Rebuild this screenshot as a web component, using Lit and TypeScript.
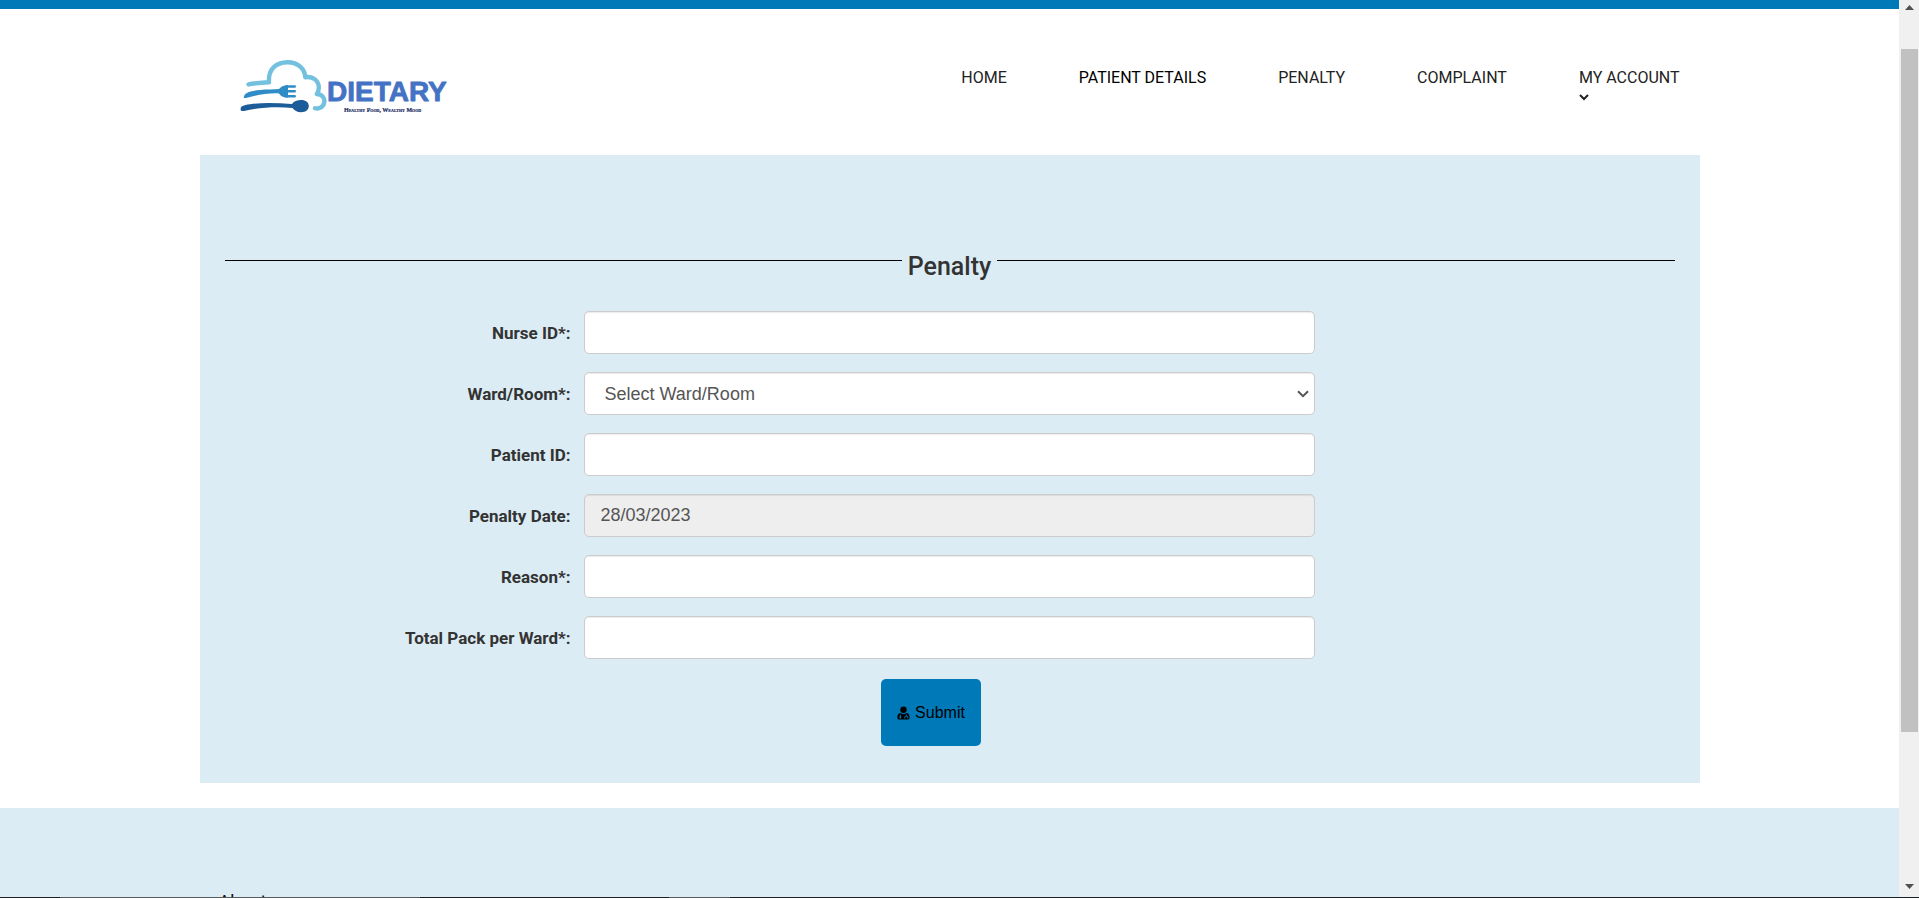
import { LitElement, html, css } from "lit";
import { customElement } from "lit/decorators.js";

@customElement("dietary-logo")
export class DietaryLogo extends LitElement {
  static styles = css`
    :host { display: block; }
    svg { display: block; width: 216px; height: 60px; }
    .word { font: 700 28px "Liberation Sans", Arial, sans-serif; }
    .tag { font: 700 6px "Liberation Serif", "Times New Roman", serif; font-variant: small-caps; }
  `;
  render() {
    return html`
      <svg viewBox="0 0 216 60" role="img" aria-label="Dietary">
        <g fill="none" stroke-linecap="round" stroke-linejoin="round">
          <path stroke="#74c0df" stroke-width="4.4"
            d="M10.5 28.4 C17 27 24 26.8 31 26.3 C30 13 38 6.4 49.5 6.3 C60 6.2 67 13 67.2 21.3 C74 20 80.5 24 80.8 31 C80.9 34 80 36.5 78.8 38 C84 38.300 87 42 86.3 46.200 C85.500 51 81.500 53.200 77 52.200"/>
          <path stroke="#2f8cc6" stroke-width="2.600" d="M48 30.500 H56.700 M46 35.300 H56.700 M48 40.300 H56.700"/>
        </g>
        <path fill="#2f8cc6" d="M5.800 42 C5.800 36.500 12 35 22 34 C29 33.200 36 33.500 41 33 C43.500 30 46 29.200 50 29.200 V41.600 C46 41.600 43 40.500 41 37.400 C30 37 19 38.800 8 42 Z"/>
        <path fill="#1c5c99" d="M2.600 53.500 C2.500 50 5 49.200 12 48.200 C26 46 40 47 54 48 C56 45 59 44 63 44 C68 44 70.800 46.500 70.800 50 C70.800 53.500 68 56.200 63 56.200 C59 56.200 56.500 54.500 54.500 52 C38 50.500 21 51.500 6 55 C4 55.300 2.700 55 2.600 53.500 Z"/>
        <text class="word" x="89" y="45" fill="#4472c4" stroke="#4472c4" stroke-width=".8" stroke-linejoin="round">DIETARY</text>
        <text class="tag" x="106" y="56" fill="#1f2f63" stroke="#1f2f63" stroke-width=".2">Healthy Food, Wealthy Mood</text>
      </svg>
    `;
  }
}

@customElement("page-scrollbar")
export class PageScrollbar extends LitElement {
  static styles = css`
    :host { display: flex; flex-direction: column; background: #f0f0f0; }
    svg { display: block; width: 100%; height: 18px; flex: none; fill: #505050; }
    .track { flex: 1; display: grid; grid-template-rows: 31fr 683fr 147fr; padding: 0 1px 0 2px; }
    .thumb { grid-row: 2; background: #c1c1c1; }
  `;
  render() {
    return html`
      <svg viewBox="0 0 20 18" aria-hidden="true"><path d="M6 10 L10.500 5 L15 10 Z"/></svg>
      <div class="track"><div class="thumb"></div></div>
      <svg viewBox="0 0 20 18" aria-hidden="true"><path d="M6 5 H15 L10.500 10 Z"/></svg>
    `;
  }
}

interface Field {
  id: string;
  label: string;
  kind: "text" | "select" | "date";
}

const FIELDS: Field[] = [
  { id: "nurse", label: "Nurse ID*:", kind: "text" },
  { id: "ward", label: "Ward/Room*:", kind: "select" },
  { id: "patient", label: "Patient ID:", kind: "text" },
  { id: "date", label: "Penalty Date:", kind: "date" },
  { id: "reason", label: "Reason*:", kind: "text" },
  { id: "packs", label: "Total Pack per Ward*:", kind: "text" },
];

const LINKS = ["HOME", "PATIENT DETAILS", "PENALTY", "COMPLAINT"];

@customElement("app-root")
export class AppRoot extends LitElement {
  static styles = css`
    :host {
      display: grid;
      grid-template-columns: 1fr 20px;
      grid-template-rows: 1fr 1px;
      height: 100vh;
      overflow: hidden;
      background: #fff;
      color: #333;
      font-family: Roboto, "Liberation Sans", sans-serif;
    }
    * { box-sizing: border-box; }
    .page { min-height: 0; overflow: hidden; display: flex; flex-direction: column; }
    .topbar { flex: none; height: 9px; background: #0079b9; }
    header {
      flex: none;
      width: 100%;
      max-width: 1500px;
      margin: 0 auto;
      padding: 47px 20px 39px 38px;
      display: flex;
      justify-content: space-between;
      align-items: flex-start;
    }
    nav ul { display: flex; gap: 72px; margin: 0; padding: 12px 0 0; list-style: none; }
    nav a { display: block; color: #222; font-size: 16px; line-height: 20px; text-decoration: none; }
    nav a.current { color: #000; }
    nav svg { display: block; width: 10px; height: 18px; fill: none; stroke: #222; stroke-width: 2; }
    main { flex: none; width: 100%; max-width: 1500px; margin: 0 auto 25px; padding: 96px 25px 37px; background: #dcecf4; }
    .title { display: flex; gap: 6px; margin: 0 0 28px; font-size: 25px; line-height: 32px; font-weight: 500; }
    .title::before, .title::after { content: ""; flex: 1; margin-top: 9px; border-top: 1px solid #000; }
    form { display: grid; gap: 18px; }
    .row { display: grid; grid-template-columns: 346fr 731fr 347fr; gap: 13px; align-items: center; }
    label { text-align: right; font-size: 17px; line-height: 24px; font-weight: 700; }
    .control {
      width: 100%;
      height: 43px;
      margin: 0;
      padding: 0 16px;
      border: 1px solid #ccc;
      border-radius: 5px;
      box-shadow: inset 0 1px 1px rgba(0, 0, 0, 0.08);
      background: #fff;
      color: #555;
      font: 18px "Liberation Sans", Arial, sans-serif;
    }
    select.control {
      appearance: none;
      padding: 0 20px;
      background: #fff url("data:image/svg+xml,%3Csvg xmlns='http://www.w3.org/2000/svg' width='12' height='8'%3E%3Cpath d='M1 1.200L6 6.200L11 1.200' fill='none' stroke='%23555' stroke-width='2'/%3E%3C/svg%3E") no-repeat right 5px center;
    }
    .control[readonly] { background: #eee; }
    button {
      justify-self: center;
      margin: 2px 37px 0 0;
      height: 67px;
      width: 100px;
      padding: 0;
      border: 0;
      border-radius: 5px;
      background: #0079b9;
      color: #000;
      font: 16px "Liberation Sans", Arial, sans-serif;
      display: flex;
      align-items: center;
      justify-content: center;
      gap: 5px;
    }
    button svg { width: 13px; height: 14px; }
    footer { flex: 1 0 auto; padding: 84px 0 0; background: #dcecf4; }
    .foot { width: 100%; max-width: 1500px; margin: 0 auto; padding-left: 19px; }
    h2 { margin: 0; font-size: 18px; line-height: 20px; font-weight: 400; color: #111; }
    .edge { grid-column: 1 / -1; display: grid; grid-template-columns: 60fr 360fr 249fr 61fr 1189fr; background: #1d2023; }
    .edge i { background: #555a5c; }
    .edge i:first-child { grid-column: 2; }
    .edge i:last-child { grid-column: 4; }
  `;

  private control(f: Field) {
    if (f.kind === "select") {
      return html`<select class="control" id=${f.id}><option>Select Ward/Room</option></select>`;
    }
    if (f.kind === "date") {
      return html`<input class="control" id=${f.id} type="text" readonly value="28/03/2023" />`;
    }
    return html`<input class="control" id=${f.id} type="text" />`;
  }

  render() {
    return html`
      <div class="page">
        <div class="topbar"></div>
        <header>
          <dietary-logo></dietary-logo>
          <nav>
            <ul>
              ${LINKS.map((l) => html`<li><a href="#" class=${l === "PATIENT DETAILS" ? "current" : ""}>${l}</a></li>`)}
              <li>
                <a href="#">MY ACCOUNT
                  <svg viewBox="0 0 10 18" aria-hidden="true"><path d="M1 7 L5 11 L9 7"/></svg>
                </a>
              </li>
            </ul>
          </nav>
        </header>
        <main>
          <h1 class="title">Penalty</h1>
          <form>
            ${FIELDS.map((f) => html`<div class="row"><label for=${f.id}>${f.label}</label>${this.control(f)}</div>`)}
            <button type="button">
              <svg viewBox="0 0 13 14" aria-hidden="true">
                <circle cx="6.500" cy="3.700" r="3.200" fill="#000"/>
                <path fill="#000" d="M3.500 7 C1.200 7.300 .4 9 .4 11.500 C.4 13 1 13.600 2.200 13.600 H10.800 C12 13.600 12.600 13 12.600 11.500 C12.600 9 11.800 7.300 9.500 7 C8 8.500 5 8.500 3.500 7 Z"/>
                <path fill="none" stroke="#0079b9" stroke-width="1" d="M3.300 8.500 V11 M9.300 8.500 V10 M7.800 12.500 V11 C7.800 9.800 10.800 9.800 10.800 11 V12.500"/>
                <circle cx="3.300" cy="11.500" r="1" fill="#0079b9"/>
              </svg>
              Submit
            </button>
          </form>
        </main>
        <footer><div class="foot"><h2>About</h2></div></footer>
      </div>
      <page-scrollbar></page-scrollbar>
      <div class="edge"><i></i><i></i></div>
    `;
  }
}
